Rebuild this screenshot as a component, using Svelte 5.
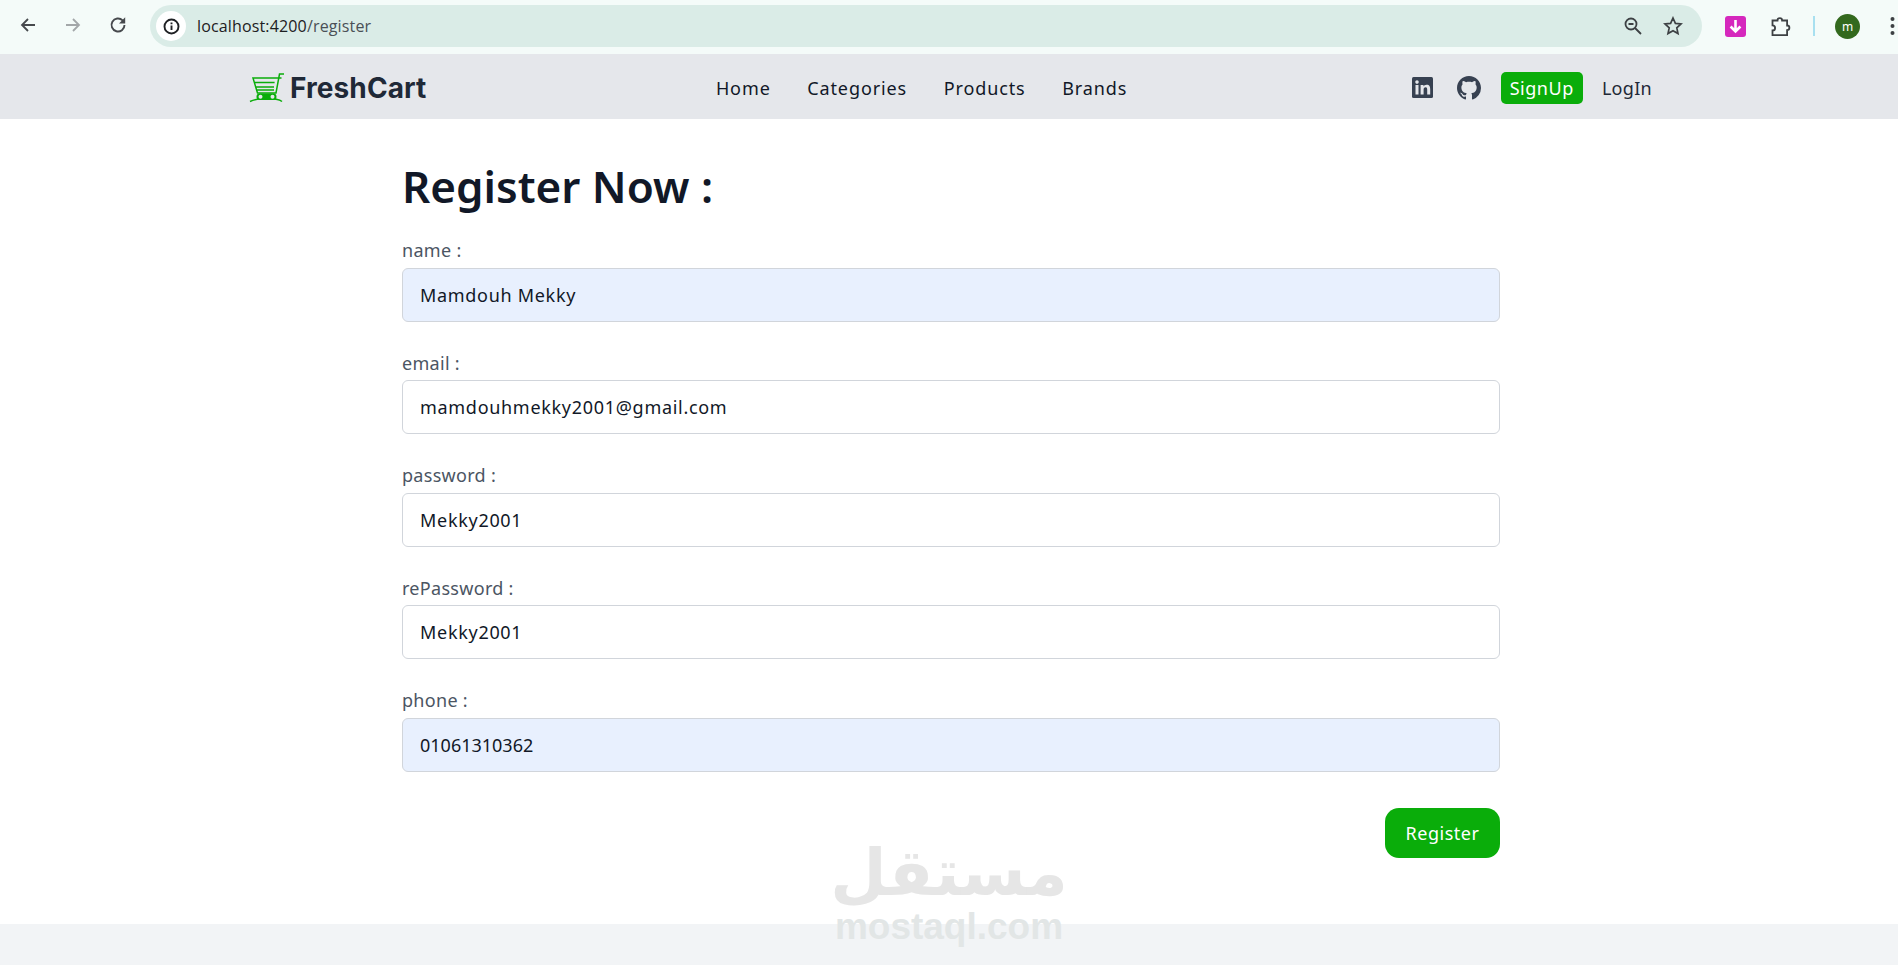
<script>
  const fields = [
    { label: 'name :', value: 'Mamdouh Mekky', filled: true, tight: false },
    { label: 'email :', value: 'mamdouhmekky2001@gmail.com', filled: false, tight: false },
    { label: 'password :', value: 'Mekky2001', filled: false, tight: false },
    { label: 'rePassword :', value: 'Mekky2001', filled: false, tight: false },
    { label: 'phone :', value: '01061310362', filled: true, tight: true }
  ];
  const links = ['Home', 'Categories', 'Products', 'Brands'];
</script>

<div class="page">
  <header class="chrome">
    <div class="navbtns">
      <svg width="18" height="18" viewBox="0 0 18 18" fill="none" stroke="#46494d" stroke-width="1.8"><path d="M16 9H3M9 3 3 9l6 6"/></svg>
      <svg width="18" height="18" viewBox="0 0 18 18" fill="none" stroke="#a3a7a9" stroke-width="1.8"><path d="M2 9h13M9 3l6 6-6 6"/></svg>
      <svg width="18" height="18" viewBox="0 0 18 18" fill="none" stroke="#46494d" stroke-width="1.9"><path d="M15.500 9a6.500 6.500 0 1 1-1.900-4.600L15.500 6.300"/><path d="M16.200 1.200v6.200H10" fill="#46494d" stroke="none"/></svg>
    </div>
    <div class="omnibox">
      <span class="info">
        <svg width="17" height="17" viewBox="0 0 17 17" fill="none" stroke="#1f2124" stroke-width="1.900"><circle cx="8.500" cy="8.500" r="7"/><path d="M8.500 7.500v4.500M8.500 4.400v1.800"/></svg>
      </span>
      <span class="url">localhost:4200<span class="path">/register</span></span>
      <span class="omni-icons">
        <svg width="20" height="20" viewBox="0 0 20 20" fill="none" stroke="#3d4144" stroke-width="1.8"><circle cx="8" cy="8" r="5.500"/><path d="M12 12l6 6M5.500 8h5"/></svg>
        <svg width="20" height="20" viewBox="0 0 20 20" fill="none" stroke="#3d4144" stroke-width="1.700"><path d="m10 2 2.400 5.400 5.600.6-4.200 3.800 1.200 5.800L10 14.700l-5 2.900 1.200-5.800L2 8l5.600-.6z"/></svg>
      </span>
    </div>
    <div class="tools">
      <svg class="ext" width="21" height="21" viewBox="0 0 21 21"><rect width="21" height="21" rx="3" fill="#d528bd"/><path d="M10.500 4v11M5.600 10.500l4.900 5 4.900-5" fill="none" stroke="#fff" stroke-width="2.600"/></svg>
      <svg class="puzzle" width="21" height="21" viewBox="0 0 21 21" fill="none" stroke="#3d4144" stroke-width="1.800"><path d="M1.500 4.500h5a2.300 2.300 0 0 1 4.600 0h5v5a2.300 2.300 0 0 1 0 4.600v5H1.500v-4.600a2.600 2.600 0 0 0 0-5.200z"/></svg>
      <span class="sep"></span>
      <span class="avatar">m</span>
      <svg class="dots" width="5" height="20" viewBox="0 0 5 20" fill="#3d4144"><circle cx="2.500" cy="3" r="2"/><circle cx="2.500" cy="10" r="2"/><circle cx="2.500" cy="17" r="2"/></svg>
    </div>
  </header>

  <nav class="navbar">
    <div class="nav-inner">
      <a class="brand" href="#top">
        <svg width="37" height="30" viewBox="0 0 37 30" fill="none" stroke="#0aad0a" stroke-width="1.500">
          <path d="M35 1h-4.500L27 20H8.500L4 5h28.500M5.600 9.500h20M7 14h18M8 17h17"/>
          <path d="M1 28.500c5-2.500 10-3 16-3s13 .5 16 3"/>
          <rect x="7.500" y="20.500" width="20" height="6.500" rx="3.200" fill="#0aad0a" stroke="none"/>
          <circle cx="11.500" cy="23.700" r="2" fill="#e5e7eb" stroke="none"/>
          <circle cx="23.500" cy="23.700" r="2" fill="#e5e7eb" stroke="none"/>
        </svg>
        <span>FreshCart</span>
      </a>
      <ul class="links">
        {#each links as link}
          <li><a href="#top">{link}</a></li>
        {/each}
      </ul>
      <div class="right">
        <svg class="in" width="21" height="21" viewBox="0 0 21 21"><rect width="21" height="21" rx="1.500" fill="#374151"/><path d="M3.500 8h3v9.500h-3zM5 3.300a1.800 1.800 0 1 1 0 3.600 1.800 1.800 0 0 1 0-3.600zM8.600 8h2.900v1.400c.5-.9 1.600-1.700 3.100-1.700 3 0 3.600 2 3.600 4.500v5.300h-3v-4.700c0-1.200-.1-2.600-1.600-2.600s-2 1.200-2 2.500v4.800h-3z" fill="#e5e7eb"/></svg>
        <svg class="gh" width="24" height="24" viewBox="0 0 16 16" fill="#374151"><path d="M8 0C3.580 0 0 3.580 0 8c0 3.540 2.290 6.530 5.470 7.590.4.07.55-.17.55-.38 0-.19-.01-.82-.01-1.490-2.010.37-2.530-.49-2.690-.94-.09-.23-.48-.94-.82-1.130-.28-.15-.68-.52-.01-.53.63-.01 1.080.58 1.230.82.720 1.210 1.870.87 2.330.66.070-.52.280-.87.510-1.070-1.780-.2-3.640-.89-3.640-3.950 0-.87.310-1.590.820-2.150-.080-.2-.360-1.020.080-2.120 0 0 .670-.210 2.200.820.640-.180 1.320-.270 2-.270s1.360.090 2 .270c1.530-1.040 2.200-.820 2.200-.820.440 1.100.160 1.920.080 2.120.510.560.820 1.270.820 2.150 0 3.070-1.870 3.750-3.650 3.950.290.250.540.730.540 1.480 0 1.070-.010 1.930-.010 2.200 0 .210.150.460.550.380A8.010 8.010 0 0 0 16 8c0-4.420-3.580-8-8-8z"/></svg>
        <a class="signup" href="#top">SignUp</a>
        <a class="login" href="#top">LogIn</a>
      </div>
    </div>
  </nav>

  <main class="main">
    <h1>Register Now :</h1>
    <form class="form">
      {#each fields as f}
        <div class="field">
          <label for={f.label}>{f.label}</label>
          <input id={f.label} class:filled={f.filled} class:tight={f.tight} type="text" value={f.value} />
        </div>
      {/each}
      <div class="actions">
        <button type="button">Register</button>
      </div>
    </form>
  </main>

  <footer class="footer"></footer>

  <div class="watermark">
    <span class="ar" dir="rtl" lang="ar">مستقل</span>
    <span class="en">mostaql.com</span>
  </div>
</div>

<style>
  :global(body) {
    margin: 0;
    background: #fff;
    font-family: "Noto Sans", "Open Sans", sans-serif;
  }
  a { text-decoration: none; color: inherit; }
  .page {
    position: relative;
    height: 965px;
    display: flex;
    flex-direction: column;
    overflow: hidden;
  }
  .chrome {
    height: 54px;
    flex: none;
    box-sizing: border-box;
    background: #f4fbf9;
    display: flex;
    align-items: flex-start;
    padding: 5px 0 0 19px;
  }
  .navbtns {
    display: flex;
    gap: 27px;
    height: 42px;
    align-items: center;
    width: 131px;
    flex: none;
    margin-top: -1px;
  }
  .omnibox {
    flex: none;
    width: 1552px;
    height: 42px;
    border-radius: 21px;
    background: #daece7;
    display: flex;
    align-items: center;
    padding: 0 19px 0 6px;
    box-sizing: border-box;
  }
  .info {
    width: 30px;
    height: 30px;
    border-radius: 50%;
    background: #fff;
    display: flex;
    align-items: center;
    justify-content: center;
    flex: none;
  }
  .url {
    margin-left: 11px;
    font-family: "Open Sans", sans-serif;
    font-size: 16px;
    letter-spacing: 0.15px;
    color: #1d2022;
    flex: 1;
  }
  .path { color: #4a5056; }
  .omni-icons { display: flex; gap: 20px; align-items: center; }
  .tools {
    display: flex;
    align-items: center;
    height: 42px;
    flex: none;
    margin-left: 23px;
  }
  .puzzle { margin-left: 25px; }
  .sep {
    width: 2px;
    height: 20px;
    background: #a8e0f0;
    margin-left: 21px;
  }
  .avatar {
    width: 25px;
    height: 25px;
    border-radius: 50%;
    background: #33691e;
    color: #fff;
    font-size: 12px;
    display: flex;
    align-items: center;
    justify-content: center;
    margin-left: 20px;
  }
  .dots { margin-left: 30px; flex: none; }

  .navbar {
    height: 65px;
    flex: none;
    background: #e5e7eb;
    display: flex;
    align-items: center;
    padding-top: 2px;
    box-sizing: border-box;
  }
  .nav-inner {
    width: 1403px;
    margin-left: 249px;
    display: flex;
    align-items: center;
    justify-content: space-between;
  }
  .brand {
    display: flex;
    align-items: center;
    gap: 4px;
    font-family: Inter, sans-serif;
    font-weight: 700;
    font-size: 28px;
    letter-spacing: 0.1px;
    color: #1f2937;
  }
  .links {
    list-style: none;
    margin: 0 0 0 5px;
    padding: 0;
    display: flex;
    gap: 36.5px;
    font-size: 18px;
    letter-spacing: 0.9px;
    color: #111827;
  }
  .right {
    display: flex;
    align-items: center;
    font-size: 18px;
    color: #1f2937;
  }
  .gh { margin-left: 24px; }
  .signup {
    margin-left: 20px;
    background: #0aad0a;
    color: #fff;
    border-radius: 5px;
    height: 32px;
    line-height: 32px;
    padding: 0 9px;
    letter-spacing: 0.55px;
  }
  .login { margin-left: 19px; letter-spacing: 0.3px; }

  .main {
    flex: 1;
    box-sizing: border-box;
    padding: 37px 398px 0 402px;
  }
  h1 {
    margin: 0 0 20px;
    font-size: 44px;
    line-height: 60px;
    font-weight: 600;
    color: #111827;
  }
  .form {
    display: flex;
    flex-direction: column;
    gap: 27px;
  }
  .field { display: flex; flex-direction: column; }
  label {
    font-size: 18px;
    line-height: 28px;
    margin-bottom: 3.5px;
    letter-spacing: 0.3px;
    color: #4b5563;
  }
  input {
    font: inherit;
    font-size: 18px;
    height: 54px;
    box-sizing: border-box;
    border: 1px solid #d1d5db;
    border-radius: 6px;
    padding: 0 17px;
    letter-spacing: 0.7px;
    color: #111827;
    background: #fff;
    outline: none;
  }
  input.tight { letter-spacing: 0; }
  input.filled { background: #e8f0fe; }
  .actions { display: flex; justify-content: flex-end; margin-top: 9px; }
  button {
    font: inherit;
    font-size: 18px;
    letter-spacing: 0.5px;
    width: 115px;
    height: 50px;
    border: none;
    border-radius: 14px;
    background: #0aad0a;
    color: #fff;
  }
  .footer { height: 41px; flex: none; background: #f2f4f6; }

  .watermark {
    position: absolute;
    left: 835px;
    top: 836px;
    width: 228px;
    display: flex;
    flex-direction: column;
    align-items: center;
    pointer-events: none;
  }
  .ar {
    font-family: "DejaVu Sans", sans-serif;
    font-weight: 700;
    font-size: 65px;
    line-height: 74px;
    color: #e6e6e6;
  }
  .en {
    font-family: "Liberation Sans", sans-serif;
    font-weight: 700;
    font-size: 37px;
    line-height: 34px;
    color: #e2e6e6;
  }
</style>
